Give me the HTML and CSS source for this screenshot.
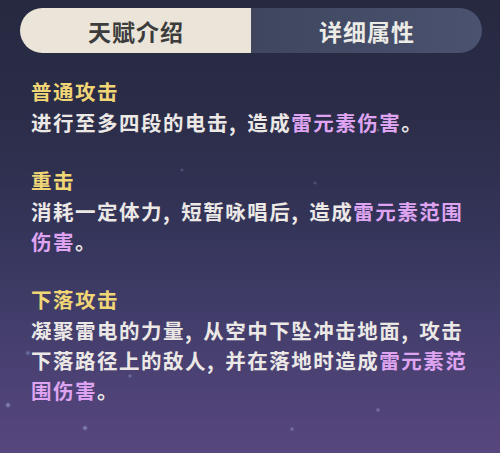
FILE: index.html
```html
<!DOCTYPE html>
<html lang="zh-CN">
<head>
<meta charset="utf-8">
<link rel="stylesheet" href="styles.css">
</head>
<body>
<div class="page">
  <div class="tabs">
    <div class="tab tab-active">天赋介绍</div>
    <div class="tab tab-idle">详细属性</div>
  </div>
  <div class="content">
    <section class="sec">
      <h2 class="title">普通攻击</h2>
      <p class="desc">进行至多四段的电击<span class="punct">,</span>造成<span class="elem">雷元素伤害</span>。</p>
    </section>
    <section class="sec">
      <h2 class="title">重击</h2>
      <p class="desc">消耗一定体力<span class="punct">,</span>短暂咏唱后<span class="punct">,</span>造成<span class="elem">雷元素范围</span><span class="elem">伤害</span>。</p>
    </section>
    <section class="sec">
      <h2 class="title">下落攻击</h2>
      <p class="desc">凝聚雷电的力量<span class="punct">,</span>从空中下坠冲击地面<span class="punct">,</span><span class="seg">攻击</span><span class="seg">下落路径上的敌人</span><span class="punct">,</span>并在落地时造成<span class="elem">雷元素范</span><span class="elem">围伤害</span>。</p>
    </section>
  </div>
</div>
</body>
</html>
```

FILE: styles.css
```css
html, body {
  margin: 0;
  padding: 0;
}
body {
  width: 500px;
  height: 453px;
  overflow: hidden;
  font-family: "Noto Sans CJK SC", "Noto Sans", sans-serif;
  background-color: #2c2e48;
  background-image:
    radial-gradient(circle at 8px 405px, rgba(170,190,230,0.7) 0, rgba(170,190,230,0) 3px),
    radial-gradient(circle at 85px 428px, rgba(180,195,235,0.6) 0, rgba(180,195,235,0) 3px),
    radial-gradient(circle at 292px 429px, rgba(180,195,235,0.45) 0, rgba(180,195,235,0) 2.5px),
    radial-gradient(circle at 378px 410px, rgba(190,190,230,0.5) 0, rgba(190,190,230,0) 2.5px),
    radial-gradient(circle at 378px 130px, rgba(190,190,230,0.4) 0, rgba(190,190,230,0) 2px),
    radial-gradient(circle at 182px 170px, rgba(190,190,230,0.35) 0, rgba(190,190,230,0) 2px),
    radial-gradient(circle at 315px 183px, rgba(190,190,230,0.35) 0, rgba(190,190,230,0) 2px),
    radial-gradient(circle at 28px 353px, rgba(150,180,230,0.5) 0, rgba(150,180,230,0) 3px),
    radial-gradient(circle at 130px 376px, rgba(150,180,230,0.5) 0, rgba(150,180,230,0) 2.5px),
    linear-gradient(180deg, #262940 0%, #2b2d48 25%, #343459 50%, #433e6c 72%, #58467f 100%);
}
.page {
  display: flex;
  flex-direction: column;
  padding: 8px 18px 0 20px;
}
.tabs {
  display: flex;
  height: 45px;
  border-radius: 23px;
  overflow: hidden;
}
.tab {
  flex: 1;
  display: flex;
  align-items: center;
  justify-content: center;
  font-size: 23px;
  font-weight: 700;
  letter-spacing: 1px;
  padding-left: 1px;
}
.tab-active {
  background: #ebe4d9;
  color: #3c3c3c;
}
.tab-idle {
  background: linear-gradient(90deg, #3f465e 0%, #4a5270 100%);
  color: #ecebe6;
}
.content {
  width: 445px;
  padding: 23px 0 0 11px;
  display: flex;
  flex-direction: column;
  gap: 28px;
}
.sec {
  margin: 0;
}
.title {
  margin: 0 0 1px 0;
  font-size: 20.5px;
  line-height: 30px;
  font-weight: 700;
  letter-spacing: 1.5px;
  color: #f1d676;
}
.desc {
  margin: 0;
  font-size: 20.5px;
  line-height: 30px;
  font-weight: 700;
  letter-spacing: 1.5px;
  color: #ebe8e6;
}
.punct {
  padding-right: 10px;
}
.elem {
  color: #dea4f1;
}
```
